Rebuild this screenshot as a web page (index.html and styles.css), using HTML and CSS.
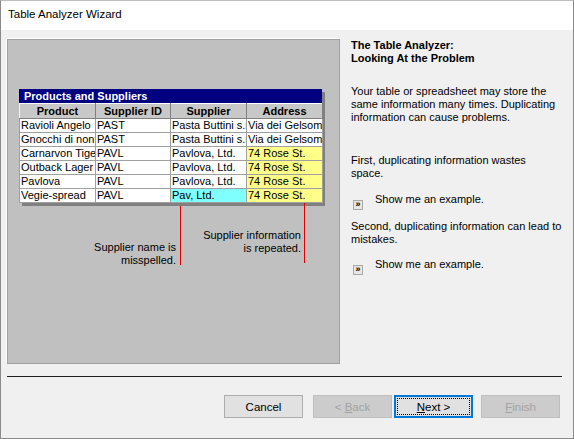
FILE: index.html
```html
<!DOCTYPE html>
<html>
<head>
<meta charset="utf-8">
<title>Table Analyzer Wizard</title>
<link rel="stylesheet" href="styles.css">
</head>
<body>
<div class="window">
  <div class="titlebar">Table Analyzer Wizard</div>
  <div class="body">
    <div class="main">
      <div class="picture">
        <div class="sheet">
          <div class="sheet-title">Products and Suppliers</div>
          <table class="grid">
            <colgroup><col class="c1"><col class="c2"><col class="c3"><col class="c4"></colgroup>
            <thead>
              <tr><th>Product</th><th>Supplier ID</th><th>Supplier</th><th>Address</th></tr>
            </thead>
            <tbody>
              <tr><td>Ravioli Angelo</td><td>PAST</td><td>Pasta Buttini s.r.l.</td><td>Via dei Gelsomini</td></tr>
              <tr><td>Gnocchi di nonna</td><td>PAST</td><td>Pasta Buttini s.r.l.</td><td>Via dei Gelsomini</td></tr>
              <tr><td>Carnarvon Tigers</td><td>PAVL</td><td>Pavlova, Ltd.</td><td class="dup">74 Rose St.</td></tr>
              <tr><td>Outback Lager</td><td>PAVL</td><td>Pavlova, Ltd.</td><td class="dup">74 Rose St.</td></tr>
              <tr><td>Pavlova</td><td>PAVL</td><td>Pavlova, Ltd.</td><td class="dup">74 Rose St.</td></tr>
              <tr><td>Vegie-spread</td><td>PAVL</td><td class="typo">Pav, Ltd.</td><td class="dup">74 Rose St.</td></tr>
            </tbody>
          </table>
        </div>
        <div class="pointer pointer-left"></div>
        <div class="pointer pointer-right"></div>
        <div class="note note-left">Supplier name is<br>misspelled.</div>
        <div class="note note-right">Supplier information<br>is repeated.</div>
      </div>
      <div class="info">
        <div class="info-title">The Table Analyzer:<br>Looking At the Problem</div>
        <p class="para p1">Your table or spreadsheet may store the same information many times. Duplicating information can cause problems.</p>
        <p class="para p2">First, duplicating information wastes<br>space.</p>
        <div class="example ex1"><span class="ex-btn">&raquo;</span><span>Show me an example.</span></div>
        <p class="para p3">Second, duplicating information can lead to mistakes.</p>
        <div class="example ex2"><span class="ex-btn">&raquo;</span><span>Show me an example.</span></div>
      </div>
    </div>
    <div class="separator"></div>
    <div class="buttons">
      <button class="btn">Cancel</button>
      <button class="btn disabled back">&lt; <u>B</u>ack</button>
      <button class="btn default next"><span class="focus"><u>N</u>ext &gt;</span></button>
      <button class="btn disabled finish"><u>F</u>inish</button>
    </div>
  </div>
</div>
</body>
</html>
```
FILE: styles.css
```css
* { box-sizing: border-box; }
html, body { margin: 0; padding: 0; }
body {
  font-family: "Liberation Sans", Arial, sans-serif;
  font-size: 11px;
  color: #000;
  background: #fff;
}
.window {
  width: 574px;
  height: 439px;
  border: 1px solid #8a8a8a;
  border-top-color: #bdbdbd;
  display: flex;
  flex-direction: column;
  background: #f0f0f0;
}
.titlebar {
  height: 29px;
  background: #fff;
  padding-left: 7px;
  line-height: 27px;
  font-size: 11.5px;
  color: #000;
}
.body {
  flex: 1;
  display: flex;
  flex-direction: column;
}
.main {
  display: flex;
  padding: 9px 0 0 6px;
}
.picture {
  position: relative;
  width: 333px;
  height: 325px;
  background: #c0c0c0;
  border: 1px solid #a0a0a0;
  box-shadow: -1px -1px 0 #ffffff;
  padding: 49px 0 0 11px;
}
.sheet {
  width: 303px;
  box-shadow: 3px 3px 0 #808080;
  background: #fff;
}
.sheet-title {
  height: 14px;
  line-height: 14px;
  background: #000080;
  color: #fff;
  font-weight: bold;
  padding-left: 5px;
  font-size: 11px;
}
.grid {
  border-collapse: collapse;
  table-layout: fixed;
  width: 303px;
  font-size: 11px;
}
.c1 { width: 76px; }
.c2 { width: 75px; }
.c3 { width: 76px; }
.c4 { width: 76px; }
.grid th {
  height: 15px;
  padding: 0;
  background: #c8c8c8;
  border-top: 1px solid #fff;
  border-left: 1px solid #f4f4f4;
  border-right: 1px solid #808080;
  border-bottom: 1px solid #808080;
  font-weight: bold;
  text-align: center;
  line-height: 13px;
  white-space: nowrap;
  overflow: hidden;
}
.grid td {
  height: 14px;
  padding: 0 0 0 1px;
  border: 1px solid #a0a0a0;
  border-top: none;
  line-height: 13px;
  white-space: nowrap;
  overflow: hidden;
  text-overflow: clip;
  background: #fff;
}
.grid td.dup { background: #ffff88; }
.grid td.typo { background: #80ffff; }
.pointer {
  position: absolute;
  width: 1px;
  background-color: #e00000;
}
.pointer-left { left: 172px; top: 166px; height: 59px; }
.pointer-right { left: 296px; top: 163px; height: 60px; }
.note {
  position: absolute;
  text-align: right;
  line-height: 12.5px;
  white-space: nowrap;
}
.note-left { right: 163px; top: 201px; }
.note-right { right: 38px; top: 189px; }
.info {
  margin-left: 11px;
  width: 212px;
  line-height: 13px;
}
.info-title {
  font-weight: bold;
}
.para { margin: 0; }
.p1 { margin-top: 20px; }
.p2 { margin-top: 30px; }
.p3 { margin-top: 10px; }
.example {
  display: flex;
  align-items: flex-start;
  margin-top: 13px;
}
.ex2 { margin-top: 12px; }
.ex-btn {
  width: 10px;
  height: 10px;
  margin: 7px 12px 0 2px;
  border: 1px solid #a9a9a9;
  background: #e6e6e6;
  font-size: 9px;
  line-height: 7px;
  text-align: center;
  font-weight: bold;
}
.separator {
  height: 1px;
  background: #1e1e1e;
  margin: 12px 11px 0 6px;
}
.buttons {
  display: flex;
  justify-content: flex-end;
  padding-right: 13px;
  margin-top: 18px;
}
.btn {
  width: 79px;
  height: 23px;
  padding: 0;
  font-family: "Liberation Sans", Arial, sans-serif;
  font-size: 11.5px;
  color: #000;
  background: #e1e1e1;
  border: 1px solid #adadad;
}
.btn.back { margin-left: 10px; }
.btn.next { margin-left: 2px; }
.btn.finish { margin-left: 8px; }
.btn.disabled {
  background: #cccccc;
  border-color: #bfbfbf;
  color: #a3a3a3;
}
.btn.default {
  border: 1px solid #0078d7;
  box-shadow: inset 0 0 0 1px #0078d7;
  padding: 2px;
  background: #e1e1e1;
}
.focus {
  display: flex;
  align-items: center;
  justify-content: center;
  width: 100%;
  height: 100%;
  outline: 1px dotted #000;
  outline-offset: -1px;
}
```
